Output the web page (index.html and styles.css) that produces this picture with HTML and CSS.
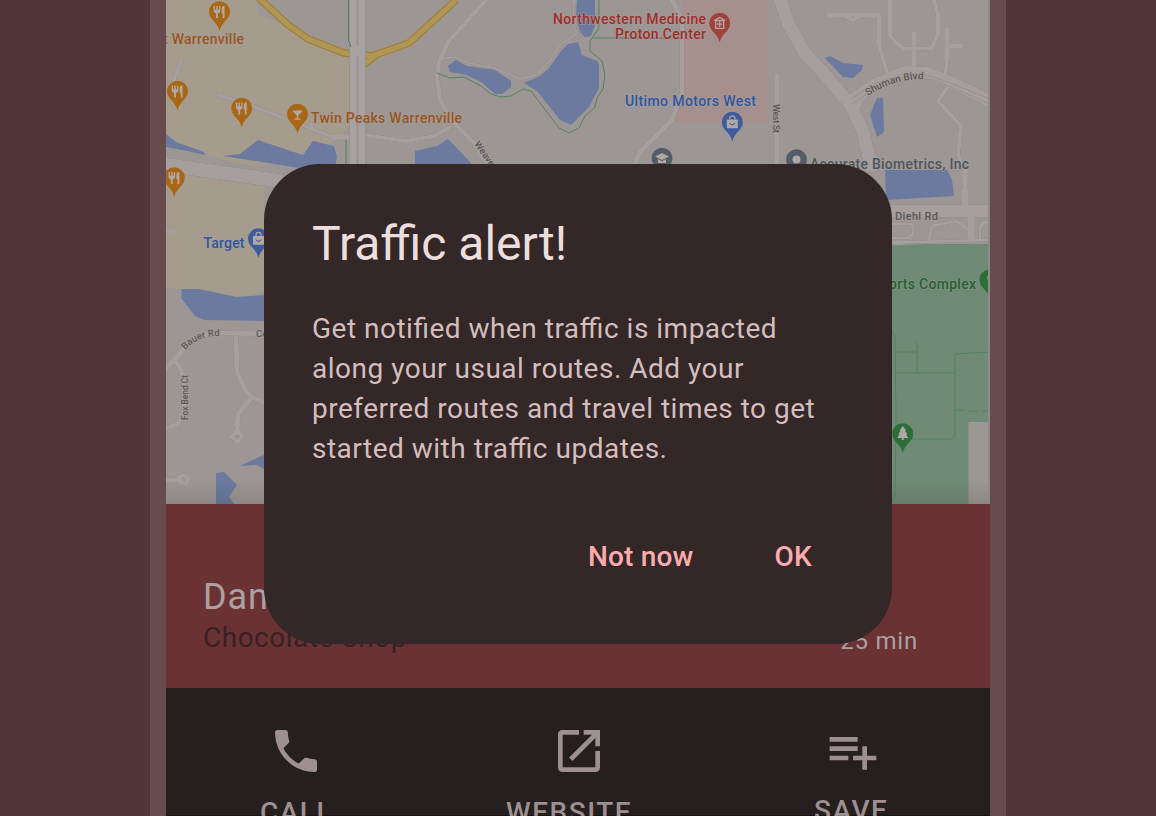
FILE: index.html
```html
<!DOCTYPE html>
<html lang="en">
<head>
<meta charset="utf-8">
<title>Traffic alert</title>
<link rel="stylesheet" href="styles.css">
</head>
<body>
<div class="stage">
<div class="phone">
<svg class="map" viewBox="166 0 824 504" width="824" height="504">
  <defs>
    <path id="pin" d="M0 19.5C-1.2 14-4 11.5-7.6 7.4A10.5 10.5 0 1 1 7.6 7.4C4 11.5 1.2 14 0 19.5Z"/>
    <g id="fork" class="glyph"><path d="M-5.8-5.5v5q0 2 2.3 2.4v4.6h2v-4.6q2.3-.4 2.3-2.4v-5h-1.3v3.7h-1.2v-3.7h-1.5v3.7h-1.2v-3.7zM2.1-2.5q0-3 2.9-3.2V6.5H3.2V1.7H2.1z"/></g>
    <g id="bag"><path class="glyph" d="M-5.5-2.5h11v8q0 .8-.8.8h-9.4q-.8 0-.8-.8z"/><path class="glyph-line" d="M-2.5-2.5v-1.2a2.5 2.5 0 0 1 5 0v1.2"/><path class="cut" d="M-2.8 1q2.8 3.6 5.6 0"/></g>
    <path id="shuman" d="M868 96Q889 81 919 79L940 80"/>
    <path id="bauer" d="M185 350Q197 337 215 336H240"/>
    <linearGradient id="shade" x1="0" y1="0" x2="0" y2="1"><stop offset="0" stop-opacity="0"/><stop offset="1" stop-opacity=".1"/></linearGradient>
  </defs>
  <rect class="land" x="166" width="824" height="504"/>
  <path class="sand" d="M166 0H256L260 15 276 21 306 42 343 57 350 60V125L340 138 333 141 316 164H264V292L237 297 212 291 183 289 166 288Z"/>
  <path class="land" d="M166 147L205 155 235 163 275 168V178L166 162Z"/>
  <path class="pink" d="M682 0H768V123H677L673 118 682 93Z"/>
  <path class="park" d="M880 246L925 244H990V504H880Z"/>
  <path class="land" d="M968.500 422H990V504H968.500Z"/>

  <g class="water">
    <path d="M166 134L176 142 204 152 205 155 187 151 166 147Z"/>
    <path d="M223 156L240 154 258 140 303 155 313 141 334 146 337 157 335 168H300Z"/>
    <path d="M415 151L437 146 448 139 471 163V168H415Z"/>
    <path d="M577 0H595V26L591 36 585 37 580 32 576 17Z"/>
    <path d="M524 83L540 76 549 68 561 51 568 44 578 42 582 55 597 61 599 65V88L589 107 571 125 560 120 537 91Z"/>
    <path d="M448 66L456 60 467 66 495 70 511 81V87L502 94H495L481 82 467 75 450 72Z"/>
    <path d="M825 58L830 56 843 63 863 65 862 70 853 78 843 77Z"/>
    <path d="M877 98H883L884 132 877 137 870 115Z"/>
    <path d="M885 170H947L952 180 954 196 886 200Z"/>
    <path d="M182 289H199L236 297 266 295V321L205 320 195 316 181 298Z"/>
    <path d="M216 473L224 472 237 485 229 497 234 504H216ZM240 466L266 454V470L257 465Z"/>
  </g>

  <g class="roads">
    <path stroke-width="14" d="M160 164L280 181"/>
    <path stroke-width="13" d="M780 -2L788 23 804 52 827 77 850 104 863 132 871 166"/>
    <path stroke-width="4" d="M181 61L173 83M218 95L250 105 333 137H350M364 135L406 141 434 136 450 127M312 123V129M166 231H175"/>
    <path stroke-width="4.500" d="M488 -2L448 42 439 62 437 77 440 100 452 121 474 143 488 166"/>
    <path stroke-width="2" d="M441 59L455 57 469 63 494 68 520 79 536 75 550 61 560 45 577 33 573 24 574 0"/>
    <path stroke-width="5" d="M671 -2L682 20V93L672 120 640 152 634 166"/>
    <path stroke-width="4" d="M777 74V166M828 15H879V45L887 72M845 16L853 20 860 16M890 0V35L896 43 905 49 932 48 938 34V15L934 0M914 32V70M947 28V60L945 77M947 46H962M950 84L938 101 961 126 958 155 965 170V203"/>
    <path stroke-width="12" d="M850 101L875 84 905 72 928 73 951 82 990 101"/>
    <path stroke-width="5" d="M856 110L866 93"/>
    <path stroke-width="13" d="M880 211H990"/>
    <path stroke-width="3" d="M880 243L990 240M880 224H911Q913 224 913 230V234L908 238H880M929 240L932 226 957 221 970 231M980 240V229Q980 222 990 222"/>
    <path stroke-width="6" d="M971 210V240M965 190V208"/>
    <path stroke-width="5" d="M166 369L183 350Q199 333 218 333L268 334M174 360Q184 370 184 384V410L178 424 166 428M236 334L237 372 245 390 252 397 268 404M252 397L238 414 237 433M166 480H181"/>
    <path stroke-width="4" d="M237 430L242 435 238 442 232 437ZM184 475L189 479 186 484 180 482 179 477Z"/>
  </g>
  <path class="road-line" d="M851 99L876 83 907 73 926 75 948 82 990 99M852 104L878 86 905 77 935 80 990 104"/>

  <g class="yellow-edge"><path d="M258 -3L287 24 308 39 344 53 372 56 409 43 456 0M350 52L362 66 376 55"/></g>
  <g class="yellow"><path d="M258 -3L287 24 308 39 344 53 372 56 409 43 456 0M350 52L362 66 376 55"/></g>
  <path class="highway-edge" d="M357.500 0V168"/>
  <path class="highway" d="M357.500 0V168"/>
  <path class="highway-mid" d="M357.500 0V46M357.500 56V168"/>

  <g class="trail">
    <path d="M348.500 0V40L351 47M346 140V166M437 73L450 78 464 77 481 86 491 94 501 97 511 96 523 89 531 91 559 128 569 133 579 128 585 116 595 107 597 98 603 89 605 75 602 61 590 51V41L599 28V0M593 38H682"/>
    <path d="M892 332L895 336 896 420 895 497 892 500M895 352H917M917 342V373M895 373H954M955 354V436L951 439H910M955 354L990 352M954 410H963M968 411H977M982 411H990"/>
  </g>

  <g class="street">
    <text x="474" y="144" transform="rotate(55 474 144)">Weaver</text>
    <text x="773" y="104" transform="rotate(90 773 104)" textLength="29">West St</text>
    <text class="curved"><textPath href="#shuman">Shuman Blvd</textPath></text>
    <text><textPath href="#bauer">Bauer Rd</textPath></text>
    <text x="188" y="420" transform="rotate(-90 188 420)" textLength="45" lengthAdjust="spacingAndGlyphs">Fox Bend Ct</text>
    <text x="256" y="337">Co</text><text class="diehl" x="895" y="219.500" textLength="43">Diehl Rd</text>
  </g>
  <g class="places">
    <text class="food" x="163" y="44.300" textLength="81">t Warrenville</text>
    <text class="food" x="311" y="122.800" textLength="151">Twin Peaks Warrenville</text>
    <text class="med" x="553" y="24.300" textLength="153">Northwestern Medicine</text>
    <text class="med" x="615" y="38.800" textLength="91">Proton Center</text>
    <text class="shop" x="625" y="106.300" textLength="131">Ultimo Motors West</text>
    <text class="shop" x="203.500" y="247.500" textLength="41">Target</text>
    <text class="firm" x="810" y="168.500" textLength="159">Accurate Biometrics, Inc</text>
    <text class="green-name" x="889" y="288.500" textLength="87">orts Complex</text>
  </g>

  <g class="pin-food">
    <g transform="translate(219.500 11.500)"><use href="#pin"/><use href="#fork"/></g>
    <g transform="translate(177.500 91)"><use href="#pin"/><use href="#fork"/></g>
    <g transform="translate(241.700 108)"><use href="#pin"/><use href="#fork"/></g>
    <g transform="translate(174.300 177.500)"><use href="#pin"/><use href="#fork"/></g>
    <g transform="translate(297.500 114)"><use href="#pin"/><path class="glyph" d="M-4.500-3.500H4.500V-2.300L.7 1.500V4.500H3.200V5.700H-3.200V4.500H-.7V1.500L-4.500-2.300Z"/></g>
  </g>
  <g class="pin-shop">
    <g transform="translate(258.500 238.500)"><use href="#pin"/><use href="#bag"/></g>
    <g transform="translate(732.300 122)"><use href="#pin"/><use href="#bag"/></g>
  </g>
  <g class="pin-med" transform="translate(719.700 23)"><use href="#pin"/><path class="glyph-line" d="M-5.500-2.500L0-5.500 5.500-2.500M-4-2.500V5.300H4V-2.500ZM0-1.500V4M-2.700 1.200H2.700"/></g>
  <g class="pin-firm" transform="translate(662 158)"><use href="#pin"/><path class="glyph" d="M-7-1.500L0-5 7-1.500 0 2ZM-4 1L0 3.200 4 1V5H-4Z"/></g>
  <g class="pin-firm" transform="translate(796.500 159.500)"><use href="#pin"/><circle class="glyph" r="4"/></g>
  <g class="pin-park" transform="translate(990 279.500)"><use href="#pin"/><path class="glyph" d="M-3-3h4v8h-2z"/></g>
  <g class="pin-park" transform="translate(902.800 433.500)"><use href="#pin"/><path class="glyph" d="M0-7.500L3.300-3H2L4.600 1H3.200L5.500 4.500H1V6.500H-1V4.500H-5.500L-3.200 1H-4.600L-2-3H-3.300Z"/></g>
  <rect x="166" y="480" width="824" height="24" fill="url(#shade)"/>
  <rect class="map-edge" x="988" width="2" height="504"/>
</svg>
<section class="place">
  <div class="place-info"><div class="place-name">Dandelion</div><div class="place-kind">Chocolate Shop</div></div>
  <div class="place-time">25 min</div>
</section>
<nav class="actions">
  <div class="action call"><svg viewBox="0 0 24 24" width="56" height="56"><path d="M6.620 10.790c1.440 2.830 3.760 5.140 6.590 6.590l2.200-2.200c.27-.27.67-.36 1.020-.24 1.120.37 2.330.57 3.570.57.55 0 1 .45 1 1V20c0 .55-.45 1-1 1-9.390 0-17-7.610-17-17 0-.55.45-1 1-1h3.500c.55 0 1 .45 1 1 0 1.250.2 2.450.57 3.570.11.35.03.74-.25 1.020l-2.200 2.200z"/></svg><span>CALL</span></div>
  <div class="action website"><svg viewBox="0 0 24 24" width="56" height="56"><path d="M12 3v2H5v14h14v-7h2v7q0 2-2 2H5q-2 0-2-2V5q0-2 2-2zM14 3h7v7h-2V6.410l-9.830 9.830-1.410-1.410L17.590 5H14z"/></svg><span>WEBSITE</span></div>
  <div class="action save"><svg viewBox="0 0 24 24" width="56" height="56"><path d="M14 10H2v2h12zm0-4H2v2h12zm4 8v-4h-2v4h-4v2h4v4h2v-4h4v-2zM2 16h8v-2H2z"/></svg><span>SAVE</span></div>
</nav>
</div>
<section class="dialog" role="dialog">
  <h1 class="dialog-title">Traffic alert!</h1>
  <p class="dialog-text">Get notified when traffic is impacted<br>along your usual routes. Add your<br>preferred routes and travel times to get<br>started with traffic updates.</p>
  <div class="dialog-actions"><button class="dialog-button">Not now</button><button class="dialog-button">OK</button></div>
</section>
</div>
</body>
</html>
```
FILE: styles.css
```css
* { box-sizing: border-box; }
body { margin: 0; background: #523537; font-family: Roboto, "Liberation Sans", sans-serif; }
.stage { position: relative; height: 816px; overflow: hidden; }
.phone { width: 856px; height: 816px; margin: 0 auto; border: solid #674b4d; border-width: 0 16px; overflow: hidden; }
.map { display: block; }
.land { fill: #9c9795; }
.sand { fill: #a69c8d; }
.pink { fill: #a6908d; }
.park { fill: #708b75; }
.water { fill: #6b7a9e; }
.roads { fill: none; stroke: #a69f9e; stroke-linejoin: round; stroke-linecap: round; filter: drop-shadow(0 0 .7px #777274); }
.road-line { fill: none; stroke: #8e8887; stroke-width: .6; }
.yellow-edge, .yellow { fill: none; stroke-linejoin: round; }
.yellow-edge { stroke: #a77b32; stroke-width: 7.5; }
.yellow { stroke: #ae9657; stroke-width: 5.2; }
.highway-edge { stroke: #918c8b; stroke-width: 17; }
.highway { stroke: #a8a2a1; stroke-width: 15.500; }
.highway-mid { stroke: #99918f; stroke-width: 2; }
.trail { fill: none; stroke: #55815e; stroke-width: 1; }
.map-edge { fill: #8f8988; }
.street { font-size: 9.500px; font-weight: 500; fill: #5a5657; stroke: #a49e9c; stroke-width: 1.500; paint-order: stroke; }
.curved { font-size: 10px; }
.diehl { font-size: 11px; }
.places { font-size: 14px; font-weight: 500; stroke: #a69e99; stroke-width: 1.200; paint-order: stroke; }
.food { fill: #9a551f; }
.med { fill: #a02d2b; }
.shop { fill: #2e569f; }
.firm { fill: #4b565e; }
.green-name { fill: #285f35; stroke: #829582; }
.pin-food { fill: #a76715; }
.pin-shop { fill: #3d5c9f; }
.pin-med { fill: #a0423c; }
.pin-firm { fill: #525e66; }
.pin-park { fill: #2b6e38; }
.glyph { fill: #b1a7a3; }
.glyph-line { fill: none; stroke: #b1a7a3; stroke-width: 1.300; }
.cut { fill: none; stroke: #3d5c9f; stroke-width: 1.200; }
.place { height: 184px; display: flex; justify-content: space-between; padding: 72px 72px 0 37px; background: #6a3234; white-space: nowrap; }
.place-name { font-size: 36px; line-height: 42px; letter-spacing: .9px; color: #aaa1a0; }
.place-kind { font-size: 28px; line-height: 40px; letter-spacing: .5px; color: #382023; }
.place-time { padding-top: 49px; font-size: 24px; line-height: 32px; letter-spacing: .8px; color: #aaa1a0; }
.actions { height: 128px; display: flex; padding: 35px 0 0 94px; background: #251f1f; border-bottom: 1px solid #1b1415; color: #9e8f90; }
.action { flex: none; display: flex; flex-direction: column; align-items: center; font-size: 28px; font-weight: 500; line-height: 32px; letter-spacing: 1.500px; }
.action svg { flex: none; fill: #9e8f90; }
.action span { margin-top: 18px; }
.call svg { margin-right: 2px; }
.website { margin-left: 173px; }
.website svg { margin-left: 20px; }
.save { margin-left: 182px; }
.save svg { margin-left: 3px; }
.save span { margin-top: 16px; }
.dialog { position: absolute; left: 264px; top: 164px; width: 628px; height: 480px; padding: 48px; border-radius: 56px; background: #332728; }
.dialog-title { margin: 0; font-size: 48px; line-height: 64px; font-weight: 400; color: #ebdedd; }
.dialog-text { margin: 33px 0 0; font-size: 28px; line-height: 40px; letter-spacing: .5px; font-feature-settings: "liga" 1; color: #d4bdbd; white-space: nowrap; }
.dialog-actions { display: flex; justify-content: flex-end; gap: 81px; margin: 68px 32px 0 0; }
.dialog-button { border: 0; padding: 0; background: none; font: 500 28px/40px Roboto, sans-serif; letter-spacing: .2px; color: #ffabae; }
```
